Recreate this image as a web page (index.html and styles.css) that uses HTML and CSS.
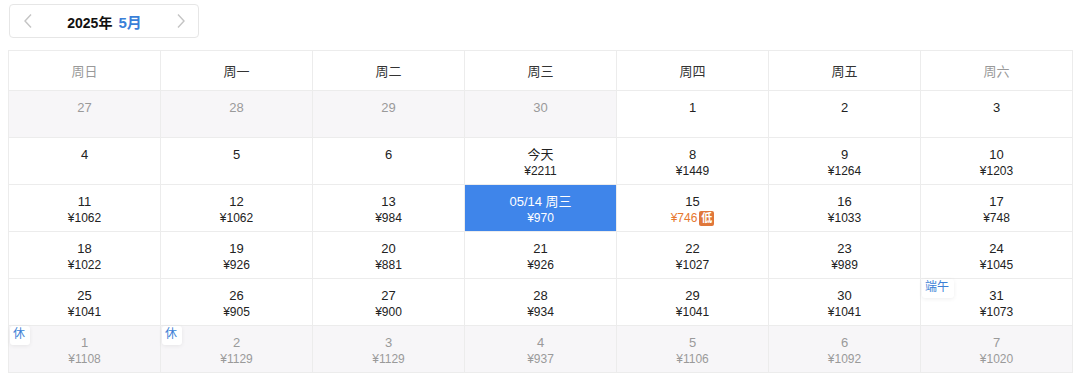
FILE: index.html
```html
<!DOCTYPE html>
<html lang="zh-CN">
<head>
<meta charset="utf-8">
<link rel="stylesheet" href="styles.css">
</head>
<body>
<div class="page">
  <div class="month-nav">
    <span class="nav-btn"><svg width="10" height="16" viewBox="0 0 10 16"><path d="M8 1.5 L2 8 L8 14.5" fill="none" stroke="#c4c4c4" stroke-width="1.4"/></svg></span>
    <span class="month-title"><span class="year">2025年</span><span class="month">5月</span></span>
    <span class="nav-btn"><svg width="10" height="16" viewBox="0 0 10 16"><path d="M2 1.5 L8 8 L2 14.5" fill="none" stroke="#c4c4c4" stroke-width="1.4"/></svg></span>
  </div>

  <div class="calendar">
    <div class="head weekend">周日</div>
    <div class="head">周一</div>
    <div class="head">周二</div>
    <div class="head">周三</div>
    <div class="head">周四</div>
    <div class="head">周五</div>
    <div class="head weekend">周六</div>

    <div class="cell other"><div class="num">27</div></div>
    <div class="cell other"><div class="num">28</div></div>
    <div class="cell other"><div class="num">29</div></div>
    <div class="cell other"><div class="num">30</div></div>
    <div class="cell"><div class="num">1</div></div>
    <div class="cell"><div class="num">2</div></div>
    <div class="cell"><div class="num">3</div></div>

    <div class="cell"><div class="num">4</div></div>
    <div class="cell"><div class="num">5</div></div>
    <div class="cell"><div class="num">6</div></div>
    <div class="cell"><div class="num">今天</div><div class="price">¥2211</div></div>
    <div class="cell"><div class="num">8</div><div class="price">¥1449</div></div>
    <div class="cell"><div class="num">9</div><div class="price">¥1264</div></div>
    <div class="cell"><div class="num">10</div><div class="price">¥1203</div></div>

    <div class="cell"><div class="num">11</div><div class="price">¥1062</div></div>
    <div class="cell"><div class="num">12</div><div class="price">¥1062</div></div>
    <div class="cell"><div class="num">13</div><div class="price">¥984</div></div>
    <div class="cell selected"><div class="num">05/14 周三</div><div class="price">¥970</div></div>
    <div class="cell"><div class="num">15</div><div class="price low">¥746<span class="low-badge">低</span></div></div>
    <div class="cell"><div class="num">16</div><div class="price">¥1033</div></div>
    <div class="cell"><div class="num">17</div><div class="price">¥748</div></div>

    <div class="cell"><div class="num">18</div><div class="price">¥1022</div></div>
    <div class="cell"><div class="num">19</div><div class="price">¥926</div></div>
    <div class="cell"><div class="num">20</div><div class="price">¥881</div></div>
    <div class="cell"><div class="num">21</div><div class="price">¥926</div></div>
    <div class="cell"><div class="num">22</div><div class="price">¥1027</div></div>
    <div class="cell"><div class="num">23</div><div class="price">¥989</div></div>
    <div class="cell"><div class="num">24</div><div class="price">¥1045</div></div>

    <div class="cell"><div class="num">25</div><div class="price">¥1041</div></div>
    <div class="cell"><div class="num">26</div><div class="price">¥905</div></div>
    <div class="cell"><div class="num">27</div><div class="price">¥900</div></div>
    <div class="cell"><div class="num">28</div><div class="price">¥934</div></div>
    <div class="cell"><div class="num">29</div><div class="price">¥1041</div></div>
    <div class="cell"><div class="num">30</div><div class="price">¥1041</div></div>
    <div class="cell"><span class="tag">端午</span><div class="num">31</div><div class="price">¥1073</div></div>

    <div class="cell other"><span class="tag">休</span><div class="num">1</div><div class="price">¥1108</div></div>
    <div class="cell other"><span class="tag">休</span><div class="num">2</div><div class="price">¥1129</div></div>
    <div class="cell other"><div class="num">3</div><div class="price">¥1129</div></div>
    <div class="cell other"><div class="num">4</div><div class="price">¥937</div></div>
    <div class="cell other"><div class="num">5</div><div class="price">¥1106</div></div>
    <div class="cell other"><div class="num">6</div><div class="price">¥1092</div></div>
    <div class="cell other"><div class="num">7</div><div class="price">¥1020</div></div>
  </div>
</div>
</body>
</html>
```

FILE: styles.css
```css
* { box-sizing: border-box; }
html, body { margin: 0; padding: 0; background: #ffffff; }
body {
  font-family: "Liberation Sans", Arial, "Noto Sans CJK SC", sans-serif;
  color: #222;
}
.page {
  padding: 4px 0 0 8px;
}
.month-nav {
  width: 190px;
  height: 34px;
  margin-left: 1px;
  border: 1px solid #e6e6e6;
  border-radius: 4px;
  display: flex;
  align-items: center;
  justify-content: space-between;
  padding: 0 12px 0 13px;
}
.nav-btn { display: flex; align-items: center; }
.month-title {
  font-size: 14px;
  font-weight: bold;
  display: flex;
  align-items: baseline;
  gap: 6px;
}
.year { color: #111; }
.month { color: #3a7fd8; font-size: 15px; }

.calendar {
  margin-top: 12px;
  width: 1065px;
  display: grid;
  grid-template-columns: repeat(7, 152px);
  grid-template-rows: 40px repeat(6, 47px);
  border-left: 1px solid #ececec;
  border-top: 1px solid #ececec;
}
.head, .cell {
  border-right: 1px solid #ececec;
  border-bottom: 1px solid #ececec;
}
.head {
  display: flex;
  align-items: center;
  justify-content: center;
  font-size: 13px;
  color: #333;
}
.head.weekend { color: #999; }
.cell {
  position: relative;
  padding-top: 8px;
  text-align: center;
  background: #fff;
  color: #222;
}
.num {
  font-size: 13px;
  line-height: 17px;
}
.price {
  font-size: 12px;
  line-height: 17px;
  display: flex;
  align-items: center;
  justify-content: center;
  gap: 2px;
}
.cell.other {
  background: #f7f6f8;
  color: #9a9a9a;
}
.cell.selected {
  background: #3f85ea;
  color: #fff;
}
.price.low { color: #e7782f; }
.low-badge {
  display: inline-block;
  width: 15px;
  height: 15px;
  line-height: 15px;
  font-size: 11px;
  font-weight: bold;
  color: #fff;
  background: #e0773a;
  border-radius: 2px;
  text-align: center;
}
.tag {
  position: absolute;
  left: 1px;
  top: 0;
  font-size: 12px;
  line-height: 15px;
  padding: 1px 5px 3px 3px;
  color: #3c7fd6;
  background: #fff;
  border-radius: 3px;
  box-shadow: 0 1px 4px rgba(0,0,0,0.07);
}
```
